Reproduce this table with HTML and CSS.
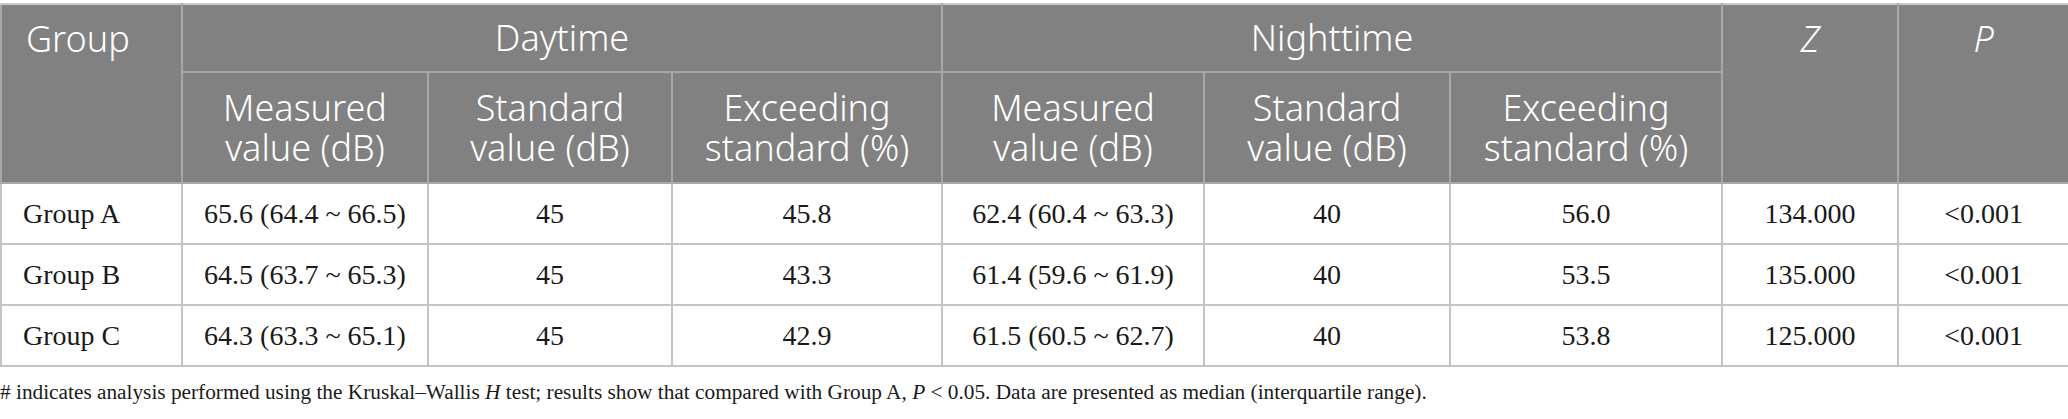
FILE: index.html
```html
<!DOCTYPE html>
<html>
<head>
<meta charset="utf-8">
<link rel="stylesheet" href="styles.css">
</head>
<body>
<table class="data">
  <colgroup>
    <col class="c1"><col class="c2"><col class="c3"><col class="c4"><col class="c5"><col class="c6"><col class="c7"><col class="c8"><col class="c9">
  </colgroup>
  <thead>
    <tr class="h1">
      <th rowspan="2" class="top left">Group</th>
      <th colspan="3">Daytime</th>
      <th colspan="3">Nighttime</th>
      <th rowspan="2" class="top"><i>Z</i></th>
      <th rowspan="2" class="top"><i>P</i></th>
    </tr>
    <tr class="h2">
      <th><span class="ln">Measured</span><span class="ln">value (dB)</span></th>
      <th><span class="ln">Standard</span><span class="ln">value (dB)</span></th>
      <th><span class="ln">Exceeding</span><span class="ln">standard (%)</span></th>
      <th><span class="ln">Measured</span><span class="ln">value (dB)</span></th>
      <th><span class="ln">Standard</span><span class="ln">value (dB)</span></th>
      <th><span class="ln">Exceeding</span><span class="ln">standard (%)</span></th>
    </tr>
  </thead>
  <tbody>
    <tr>
      <td class="left">Group A</td>
      <td>65.6 (64.4 ~ 66.5)</td>
      <td>45</td>
      <td>45.8</td>
      <td>62.4 (60.4 ~ 63.3)</td>
      <td>40</td>
      <td>56.0</td>
      <td>134.000</td>
      <td>&lt;0.001</td>
    </tr>
    <tr>
      <td class="left">Group B</td>
      <td>64.5 (63.7 ~ 65.3)</td>
      <td>45</td>
      <td>43.3</td>
      <td>61.4 (59.6 ~ 61.9)</td>
      <td>40</td>
      <td>53.5</td>
      <td>135.000</td>
      <td>&lt;0.001</td>
    </tr>
    <tr>
      <td class="left">Group C</td>
      <td>64.3 (63.3 ~ 65.1)</td>
      <td>45</td>
      <td>42.9</td>
      <td>61.5 (60.5 ~ 62.7)</td>
      <td>40</td>
      <td>53.8</td>
      <td>125.000</td>
      <td>&lt;0.001</td>
    </tr>
  </tbody>
</table>
<p class="note"># indicates analysis performed using the Kruskal–Wallis <i>H</i> test; results show that compared with Group A, <i>P</i> &lt; 0.05. Data are presented as median (interquartile range).</p>
</body>
</html>
```
FILE: styles.css
```css
html, body {
  margin: 0;
  padding: 0;
  background: #ffffff;
}
body {
  padding-top: 3px;
}
.data {
  width: 2068px;
  border-collapse: collapse;
  table-layout: fixed;
}
.c1 { width: 181px; }
.c2 { width: 246px; }
.c3 { width: 244px; }
.c4 { width: 270px; }
.c5 { width: 262px; }
.c6 { width: 246px; }
.c7 { width: 272px; }
.c8 { width: 176px; }
.c9 { width: 171px; }

.data th {
  background: #808180;
  color: #ffffff;
  font-family: "Noto Sans", "Open Sans", sans-serif;
  font-weight: 300;
  font-size: 36px;
  line-height: 40px;
  text-align: center;
  vertical-align: middle;
  border: 2px solid #a8a8a8;
  padding: 0 8px;
  white-space: nowrap;
}
.data th .ln {
  display: block;
  line-height: 40px;
}
.data thead tr.h1 th {
  border-top-color: #c8c8c8;
}
.data th.top {
  vertical-align: top;
  padding-top: 14px;
}
.data th.left {
  text-align: left;
  padding-left: 24px;
}
.data th i {
  font-style: italic;
}
.h1 { height: 68px; }
.h2 { height: 111px; }

.data td {
  font-family: "Liberation Serif", "Times New Roman", serif;
  font-size: 28px;
  color: #1a1a1a;
  text-align: center;
  vertical-align: middle;
  border: 2px solid #c4c4c4;
  height: 59px;
  padding: 0 10px;
}
.data td.left {
  text-align: left;
  padding-left: 21px;
}
.note {
  margin: 11px 0 0 0;
  font-family: "Liberation Serif", "Times New Roman", serif;
  font-size: 21.3px;
  line-height: 28px;
  color: #1a1a1a;
}
```
